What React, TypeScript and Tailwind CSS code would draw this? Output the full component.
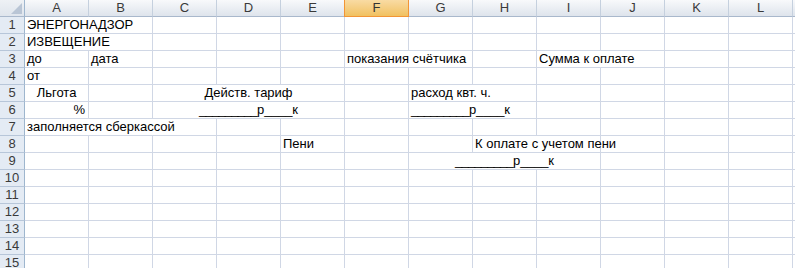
import React from "react";

type Align = "left" | "center" | "right";
type Cell = { span?: 1 | 2 | 3; text?: React.ReactNode; align?: Align };

const COLS = ["A", "B", "C", "D", "E", "F", "G", "H", "I", "J", "K", "L", "M"];

const spanClass: Record<number, string> = {
  1: "col-span-1",
  2: "col-span-2",
  3: "col-span-3",
};

const alignClass: Record<Align, string> = {
  left: "justify-start pl-[2px]",
  center: "justify-center",
  right: "justify-end pr-[3px]",
};

// Blank cells to fill the rest of a row
const blanks = (n: number): Cell[] => Array.from({ length: n }, () => ({}));

// A "rubles / kopecks" fill-in line
const Blank = () => (
  <span>
    <span className="tracking-[-0.8px]">_________</span>р<span className="tracking-[-0.2px]">____</span>к
  </span>
);

const rows: Cell[][] = [
  [{ span: 2, text: "ЭНЕРГОНАДЗОР" }, ...blanks(11)],
  [{ span: 2, text: "ИЗВЕЩЕНИЕ" }, ...blanks(11)],
  [
    { text: "до" },
    { text: "дата" },
    ...blanks(3),
    { span: 2, text: "показания счётчика" },
    {},
    { span: 2, text: "Сумма к оплате" },
    ...blanks(3),
  ],
  [{ text: "от" }, ...blanks(12)],
  [
    { text: "Льгота", align: "center" },
    {},
    { span: 3, text: "Действ. тариф", align: "center" },
    {},
    { span: 2, text: "расход квт. ч." },
    ...blanks(5),
  ],
  [
    { text: "%", align: "right" },
    {},
    { span: 3, text: <Blank />, align: "center" },
    {},
    { span: 2, text: <Blank /> },
    ...blanks(5),
  ],
  [{ span: 3, text: "заполняется сберкассой" }, ...blanks(10)],
  [
    ...blanks(4),
    { text: "Пени" },
    ...blanks(2),
    { span: 2, text: "К оплате с учетом пени" },
    ...blanks(4),
  ],
  [...blanks(6), { span: 3, text: <Blank />, align: "center" }, ...blanks(4)],
  ...Array.from({ length: 6 }, () => blanks(13)),
];

const gridCols = "grid grid-cols-[25px_repeat(13,64px)]";

function ColumnHeader({ label }: { label: string }) {
  if (label === "F") {
    return (
      <div className="h-[17px] flex items-center justify-center border-x border-b border-[#f29536] bg-gradient-to-b from-[#f9dba3] to-[#f1c15f] -ml-px text-[#333]">
        {label}
      </div>
    );
  }
  return (
    <div className="h-[17px] flex items-center justify-center border-r border-b border-r-[#c5d0de] border-b-[#a9b8cc] bg-gradient-to-b from-[#f8f9fb] to-[#dee4ec] text-[#3a3a3a]">
      {label}
    </div>
  );
}

export default function App() {
  return (
    <div
      className="w-[795px] h-[268px] overflow-hidden bg-white text-[13px] leading-4 text-black"
      style={{ fontFamily: '"Liberation Sans", Arial, sans-serif' }}
    >
      {/* column headers */}
      <div className={gridCols}>
        <div className="h-[17px] border-r border-b border-r-[#9eb6ce] border-b-[#a9b8cc] bg-gradient-to-b from-[#eef1f5] to-[#dfe5ed] flex items-start">
          <svg width="24" height="16" viewBox="0 0 24 16">
            <polygon points="22,3 22,14 11,14" fill="#b9c5d5" />
          </svg>
        </div>
        {COLS.map((c) => (
          <ColumnHeader key={c} label={c} />
        ))}
      </div>

      {/* sheet rows */}
      {rows.map((row, r) => (
        <div key={r} className={gridCols}>
          <div className="h-[17px] flex items-center justify-center bg-[#e4ebf4] border-r border-b border-r-[#9eb6ce] border-b-[#b7c6d9] text-[#3a3a3a]">
            {r + 1}
          </div>
          {row.map((cell, i) => (
            <div
              key={i}
              className={`h-[17px] flex items-end whitespace-nowrap overflow-visible border-r border-b border-[#d0d7e5] ${
                spanClass[cell.span ?? 1]
              } ${alignClass[cell.align ?? "left"]}`}
            >
              {cell.text ? <span className="leading-4">{cell.text}</span> : null}
            </div>
          ))}
        </div>
      ))}
    </div>
  );
}
